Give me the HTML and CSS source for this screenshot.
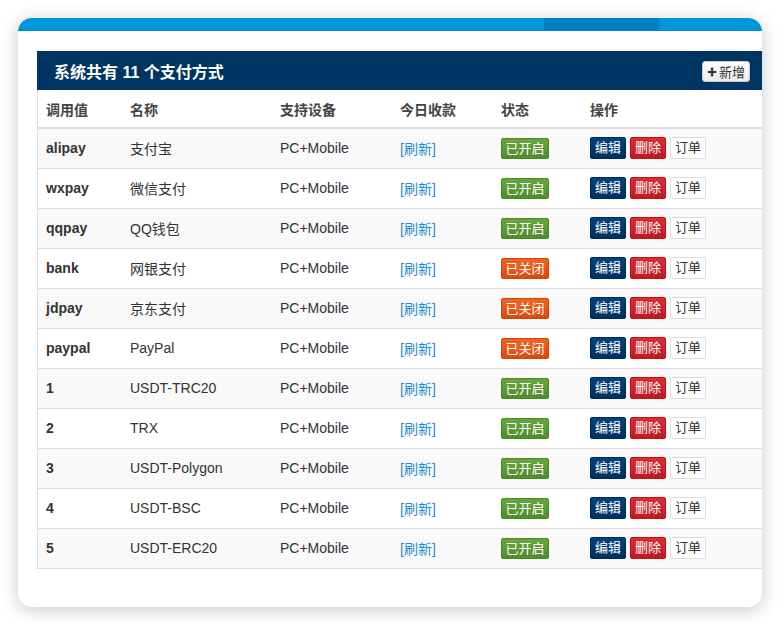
FILE: index.html
```html
<!DOCTYPE html>
<html lang="zh">
<head>
<meta charset="utf-8">
<link rel="stylesheet" href="styles.css">
</head>
<body>
<div class="card">
  <div class="topbar"><div class="seg-a"></div><div class="seg-b"></div><div class="seg-c"></div></div>
  <div class="content">
    <div class="panel">
      <div class="panel-head">
        <h3 class="panel-title">系统共有 11 个支付方式</h3>
        <button class="btn-add"><span class="plus">✚</span>新增</button>
      </div>
      <table class="tbl">
        <colgroup><col class="c1"><col class="c2"><col class="c3"><col class="c4"><col class="c5"><col class="c6"></colgroup>
        <thead>
          <tr><th>调用值</th><th>名称</th><th>支持设备</th><th>今日收款</th><th>状态</th><th>操作</th></tr>
        </thead>
        <tbody>
          <tr><td class="k">alipay</td><td>支付宝</td><td>PC+Mobile</td><td><a class="lnk">[刷新]</a></td><td><span class="lab on">已开启</span></td><td class="ops"><span class="b edit">编辑</span><span class="b del">删除</span><span class="b ord">订单</span></td></tr>
          <tr><td class="k">wxpay</td><td>微信支付</td><td>PC+Mobile</td><td><a class="lnk">[刷新]</a></td><td><span class="lab on">已开启</span></td><td class="ops"><span class="b edit">编辑</span><span class="b del">删除</span><span class="b ord">订单</span></td></tr>
          <tr><td class="k">qqpay</td><td>QQ钱包</td><td>PC+Mobile</td><td><a class="lnk">[刷新]</a></td><td><span class="lab on">已开启</span></td><td class="ops"><span class="b edit">编辑</span><span class="b del">删除</span><span class="b ord">订单</span></td></tr>
          <tr><td class="k">bank</td><td>网银支付</td><td>PC+Mobile</td><td><a class="lnk">[刷新]</a></td><td><span class="lab off">已关闭</span></td><td class="ops"><span class="b edit">编辑</span><span class="b del">删除</span><span class="b ord">订单</span></td></tr>
          <tr><td class="k">jdpay</td><td>京东支付</td><td>PC+Mobile</td><td><a class="lnk">[刷新]</a></td><td><span class="lab off">已关闭</span></td><td class="ops"><span class="b edit">编辑</span><span class="b del">删除</span><span class="b ord">订单</span></td></tr>
          <tr><td class="k">paypal</td><td>PayPal</td><td>PC+Mobile</td><td><a class="lnk">[刷新]</a></td><td><span class="lab off">已关闭</span></td><td class="ops"><span class="b edit">编辑</span><span class="b del">删除</span><span class="b ord">订单</span></td></tr>
          <tr><td class="k">1</td><td>USDT-TRC20</td><td>PC+Mobile</td><td><a class="lnk">[刷新]</a></td><td><span class="lab on">已开启</span></td><td class="ops"><span class="b edit">编辑</span><span class="b del">删除</span><span class="b ord">订单</span></td></tr>
          <tr><td class="k">2</td><td>TRX</td><td>PC+Mobile</td><td><a class="lnk">[刷新]</a></td><td><span class="lab on">已开启</span></td><td class="ops"><span class="b edit">编辑</span><span class="b del">删除</span><span class="b ord">订单</span></td></tr>
          <tr><td class="k">3</td><td>USDT-Polygon</td><td>PC+Mobile</td><td><a class="lnk">[刷新]</a></td><td><span class="lab on">已开启</span></td><td class="ops"><span class="b edit">编辑</span><span class="b del">删除</span><span class="b ord">订单</span></td></tr>
          <tr><td class="k">4</td><td>USDT-BSC</td><td>PC+Mobile</td><td><a class="lnk">[刷新]</a></td><td><span class="lab on">已开启</span></td><td class="ops"><span class="b edit">编辑</span><span class="b del">删除</span><span class="b ord">订单</span></td></tr>
          <tr><td class="k">5</td><td>USDT-ERC20</td><td>PC+Mobile</td><td><a class="lnk">[刷新]</a></td><td><span class="lab on">已开启</span></td><td class="ops"><span class="b edit">编辑</span><span class="b del">删除</span><span class="b ord">订单</span></td></tr>
        </tbody>
      </table>
    </div>
  </div>
</div>
</body>
</html>
```
FILE: styles.css
```css
* { box-sizing: border-box; }
html, body { margin: 0; padding: 0; background: #fff; }
body {
  font-family: "Liberation Sans", "Noto Sans CJK SC", sans-serif;
  font-size: 14px;
  color: #333;
  padding: 18px;
}
.card {
  width: 744px;
  height: 589px;
  background: #fff;
  border-radius: 14px;
  overflow: hidden;
  box-shadow: 0 3px 18px rgba(0,0,0,0.22);
}
.topbar {
  display: flex;
  height: 13px;
  background: #0096dc;
  border-bottom: 1px solid #0085c8;
}
.seg-a { flex: 0 0 526px; }
.seg-b { flex: 0 0 115px; background: #007fc0; }
.seg-c { flex: 1; }
.content {
  padding: 20px 0 0 19px;
}
.panel {
  width: 760px;
  border: 1px solid #ddd;
  border-right: none;
  background: #fff;
}
.panel-head {
  display: flex;
  align-items: center;
  height: 39px;
  background: #003462;
  padding: 0 47px 0 17px;
  margin: -1px 0 0 -1px;
}
.panel-title {
  margin: 0;
  color: #fff;
  font-size: 16px;
  font-weight: bold;
  font-family: "Liberation Sans", "Noto Sans CJK SC", sans-serif;
}
.btn-add {
  margin-left: auto;
  margin-top: 1px;
  height: 21px;
  width: 48px;
  padding: 0;
  border: 1px solid #ccc;
  border-radius: 3px;
  background: linear-gradient(#fff, #ececec);
  color: #333;
  font-size: 13px;
  font-family: "Liberation Sans", "Noto Sans CJK SC", sans-serif;
  display: flex;
  align-items: center;
  justify-content: center;
  gap: 2px;
}
.plus { font-size: 10px; }
.tbl {
  border-collapse: collapse;
  table-layout: fixed;
  width: 100%;
}
col.c1 { width: 84px; }
col.c2 { width: 150px; }
col.c3 { width: 120px; }
col.c4 { width: 101px; }
col.c5 { width: 89px; }
col.c6 { width: auto; }
.tbl th {
  text-align: left;
  font-weight: bold;
  color: #444;
  height: 38px;
  padding: 0 8px;
  border-bottom: 2px solid #ddd;
}
.tbl td {
  height: 40px;
  padding: 0 8px;
  border-top: 1px solid #ddd;
  vertical-align: middle;
  white-space: nowrap;
}
.tbl thead + tbody tr:first-child td { border-top: none; }
.tbl tbody tr:nth-child(odd) td { background: #f9f9f9; }
.tbl td.k { font-weight: bold; }
.lnk { color: #1c8dd6; }
.lab {
  display: inline-block;
  width: 48px;
  height: 21px;
  line-height: 19px;
  text-align: center;
  color: #fff;
  font-size: 13px;
  border-radius: 2px;
}
.lab.on { background: linear-gradient(#64a83c, #4f8d2b); border: 1px solid #4b8727; }
.lab.off { background: linear-gradient(#f2631f, #d84a10); border: 1px solid #cc4410; }
.ops { font-size: 0; padding-top: 1px; }
.b {
  display: inline-block;
  width: 36px;
  height: 22px;
  line-height: 20px;
  text-align: center;
  font-size: 13px;
  border-radius: 2px;
  margin-right: 4px;
}
.b.edit { background: linear-gradient(#034280, #00315e); color: #fff; border: 1px solid #002b55; }
.b.del { background: linear-gradient(#e02a30, #be1b22); color: #fff; border: 1px solid #b5191f; }
.b.ord { background: #fff; color: #333; border: 1px solid #ddd; }
```
